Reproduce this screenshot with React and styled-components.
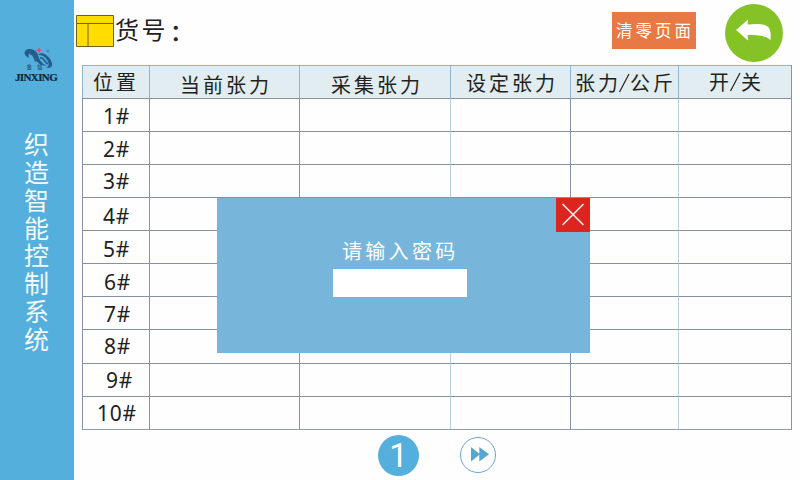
import React from "react";
import styled, { createGlobalStyle } from "styled-components";

const GlobalStyle = createGlobalStyle`
  * { box-sizing: border-box; }
  body {
    margin: 0;
    background: #fefefe;
    font-family: "Noto Sans CJK SC", sans-serif;
    color: #231f20;
  }
`;

const Screen = styled.div`
  position: relative;
  display: flex;
  width: 800px;
  height: 480px;
  overflow: hidden;
  background: #fefefe;
`;

const Sidebar = styled.aside`
  flex: none;
  width: 74px;
  height: 480px;
  background: #55afdc;
`;

const Brand = styled.div`
  display: flex;
  flex-direction: column;
  align-items: center;
  height: 130px;
  padding-top: 46px;
`;

const BrandMark = styled.svg`
  display: block;
  flex: none;
  margin-left: 4px;
`;

const BrandSub = styled.div`
  display: flex;
  gap: 5px;
  height: 7px;
  margin: -6px 5px 0 0;
  font-size: 5.5px;
  font-weight: 500;
  line-height: 7px;
  color: #1f4f72;
`;

const BrandName = styled.div`
  margin: 0 2px 0 0;
  font: 700 11px/12px "Liberation Serif", serif;
  letter-spacing: -0.6px;
  color: #14252f;
  -webkit-text-stroke: 0.2px #14252f;
  white-space: nowrap;
`;

const SystemTitle = styled.h1`
  width: 25px;
  margin: 0 0 0 24px;
  font-size: 25px;
  font-weight: 400;
  line-height: 27.85px;
  color: #f2fbff;
  word-break: break-all;
`;

const Main = styled.main`
  display: flex;
  flex: 1;
  flex-direction: column;
  min-width: 0;
`;

const TopBar = styled.header`
  display: flex;
  height: 65px;
  padding-left: 2px;
`;

const PanelIcon = styled.svg`
  flex: none;
  margin-top: 15px;
`;

const ItemLabel = styled.div`
  display: flex;
  flex: none;
  width: 498px;
  padding: 11px 0 0 1px;
  font-size: 24px;
  line-height: 36px;
  letter-spacing: 2.6px;
`;

const Colon = styled.span`
  margin: 1px 0 0 2px;
  font-size: 22px;
  -webkit-text-stroke: 0.7px #231f20;
`;

const ClearButton = styled.button`
  flex: none;
  width: 84px;
  height: 37px;
  margin: 12px 0 0 0;
  padding: 0 0 0 4px;
  border: 0;
  background: #e87844;
  color: #fff;
  font-family: inherit;
  font-size: 16.5px;
  line-height: 35px;
  letter-spacing: 3px;
  text-align: left;
  white-space: nowrap;
`;

const BackButton = styled.button`
  flex: none;
  width: 58px;
  height: 58px;
  margin: 4px 0 0 29px;
  padding: 0;
  border: 0;
  border-radius: 50%;
  background: #84c225;

  svg { display: block; }
`;

const Table = styled.div`
  display: grid;
  grid-template-columns: 67px 150px 151px 120px 108px 113px;
  grid-template-rows: repeat(8, 33px) 34px 33px 33px;
  width: 710px;
  margin-left: 8px;
  border-right: 1px solid #8295ac;
  border-bottom: 1px solid #939aae;
`;

const Cell = styled.div`
  border-left: 1px solid ${(p) => (p.$soft ? "#b9d0df" : "#8590a9")};
  border-top: 1px solid #8590a5;
  padding-left: ${(p) => p.$x || 0}px;
  padding-top: ${(p) => p.$y || 0}px;
  font-family: "Noto Sans", "Noto Sans CJK SC", sans-serif;
  font-size: 21px;
  line-height: 30px;
  letter-spacing: 0.7px;
  white-space: nowrap;
`;

const HeadCell = styled(Cell)`
  border-color: #8fb4cc;
  background: #e1edf0;
  font-family: "Noto Sans CJK SC", sans-serif;
  font-size: 20px;
  letter-spacing: 3px;
`;

const Slash = styled.svg`
  display: inline-block;
  margin: 0 0 0 -3px;
  vertical-align: -2px;
`;

const Pager = styled.nav`
  display: flex;
  gap: 41px;
  padding: 5px 0 0 304px;
`;

const PageNumber = styled.span`
  width: 41px;
  height: 41px;
  border-radius: 50%;
  background: #55afdc;
  color: #fff;
  font: 33px/42px Roboto, sans-serif;
  text-align: center;
`;

const NextButton = styled.button`
  width: 36px;
  height: 36px;
  margin-top: 2px;
  padding: 0;
  border: 1px solid #66a9cf;
  border-radius: 50%;
  background: #fff;

  svg { display: block; }
`;

const Dialog = styled.section`
  position: absolute;
  left: 217px;
  top: 198px;
  display: flex;
  flex-direction: column;
  align-items: flex-start;
  width: 373px;
  height: 155px;
  background: #77b5db;
`;

const CloseButton = styled.button`
  align-self: flex-end;
  width: 34px;
  height: 34px;
  padding: 0;
  border: 0;
  background: #dc251f;

  svg { display: block; }
`;

const Prompt = styled.label`
  margin: 4px 0 0 125px;
  color: #fff;
  font-size: 20px;
  line-height: 30px;
  letter-spacing: 3.3px;
`;

const PasswordInput = styled.input`
  width: 134px;
  height: 28px;
  margin: 3px 0 0 116px;
  padding: 0 6px;
  border: 0;
  background: #fff;
  outline: none;
`;

const SlashMark = () => (
  <Slash width="12" height="20" viewBox="0 0 12 20">
    <path d="M11 1 L1.5 19" stroke="#231f20" strokeWidth="1.2" />
  </Slash>
);

const columns = [
  { label: "位置", x: 10, y: 1 },
  { label: "当前张力", x: 30, y: 4 },
  { label: "采集张力", x: 31, y: 4 },
  { label: "设定张力", x: 15, y: 2, soft: true },
  { label: <>张力<SlashMark />公斤</>, x: 4, y: 2 },
  { label: <>开<SlashMark />关</>, x: 30, y: 1, soft: true },
];

const rows = [
  { label: "1#", x: 20, y: 2 },
  { label: "2#", x: 20, y: 2 },
  { label: "3#", x: 20, y: 1 },
  { label: "4#", x: 20, y: 3 },
  { label: "5#", x: 20, y: 3 },
  { label: "6#", x: 21, y: 3 },
  { label: "7#", x: 21, y: 2 },
  { label: "8#", x: 21, y: 1 },
  { label: "9#", x: 23, y: 1 },
  { label: "10#", x: 14, y: 1 },
];

export default function App() {
  return (
    <>
      <GlobalStyle />
      <Screen>
        <Sidebar>
          <Brand>
            <BrandMark width="32" height="24" viewBox="0 0 32 24">
              <path d="M6 12 C1 10 0 5 4 3.5 C9 2 14 5 15 9 C16 14 19 18 24 19.5 C18 20 14 17 12 12 C10 7 4 5 6 12Z" fill="#245d8c" />
              <path d="M7 8 C11 7 11 13 13 15.5" fill="none" stroke="#245d8c" strokeWidth="1.6" />
              <path d="M15 9 C18 5 24 8 27 13 C31 19 29 23 23 21.5 C27 20.5 26 16 23 12.5 C21 10 18 8.5 15 9Z" fill="#245d8c" />
              <path d="M17 12 C21 11 21 16 25 18" fill="none" stroke="#245d8c" strokeWidth="1.6" />
              <path d="M16 2 V6.6 M13.7 4.3 H18.3" stroke="#d24f5c" strokeWidth="1.3" />
              <circle cx="25" cy="5" r="1.2" fill="none" stroke="#42799a" strokeWidth=".7" />
            </BrandMark>
            <BrandSub><span>金</span><span>信</span></BrandSub>
            <BrandName>JINXING</BrandName>
          </Brand>
          <SystemTitle>织造智能控制系统</SystemTitle>
        </Sidebar>
        <Main>
          <TopBar>
            <PanelIcon width="38" height="32" viewBox="0 0 38 32">
              <path d="M.5 .5H37.5V31.5H.5Z M.5 8.5H37.5 M12 8.5V31.5" fill="#ffdd00" stroke="#6e6414" />
            </PanelIcon>
            <ItemLabel>货号<Colon>：</Colon></ItemLabel>
            <ClearButton>清零页面</ClearButton>
            <BackButton aria-label="返回">
              <svg width="58" height="58" viewBox="0 0 58 58">
                <path d="M11 26 L23 15.5 L22.5 20.5 C31 19.5 38 19.5 42 22 C46 25 46 30 45.5 36 C41 31.5 34 31 22.5 31 L23 36.5 Z" fill="#fff" />
              </svg>
            </BackButton>
          </TopBar>
          <Table>
            {columns.map((c, i) => (
              <HeadCell key={i} $x={c.x} $y={c.y}>{c.label}</HeadCell>
            ))}
            {rows.map((r) =>
              columns.map((c, i) => (
                <Cell key={r.label + i} $soft={c.soft} $x={i ? 0 : r.x} $y={i ? 0 : r.y}>
                  {i === 0 ? r.label : null}
                </Cell>
              ))
            )}
          </Table>
          <Pager>
            <PageNumber>1</PageNumber>
            <NextButton aria-label="下一页">
              <svg width="34" height="34" viewBox="0 0 34 34">
                <path d="M10 9 L19 16.3 L10 23.5Z M18.3 9 L28 16.3 L18.3 23.5Z" fill="#55a6d3" />
              </svg>
            </NextButton>
          </Pager>
        </Main>
        <Dialog>
          <CloseButton aria-label="关闭">
            <svg width="34" height="34" viewBox="0 0 34 34">
              <path d="M6.5 6 L27.5 27 M27.5 6 L6.5 27" stroke="#fde9e6" strokeWidth="1.7" />
            </svg>
          </CloseButton>
          <Prompt htmlFor="password">请输入密码</Prompt>
          <PasswordInput id="password" type="password" />
        </Dialog>
      </Screen>
    </>
  );
}
